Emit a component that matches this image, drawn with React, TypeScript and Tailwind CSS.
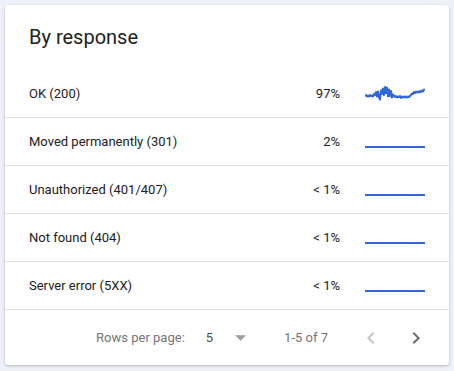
import React from 'react';

interface RowData {
  label: string;
  pct: string;
  points: string;
}

const FLAT = '0,15 60,15';

// first row sparkline, traced by eye
const OK_POINTS = [
  [0, 12], [1, 11], [2, 12.5], [3, 11.5], [4, 12.5], [5, 11], [6, 12], [7, 11.5], [8, 12.5], [9, 10],
  [10, 11], [11, 8], [12, 12.5], [13, 7.5], [14, 13.5], [15, 15.5], [16, 6.5], [17, 10], [18, 4.5],
  [19, 11], [20, 3], [21, 9], [22, 3.5], [23, 12.5], [24, 5.5], [25, 12], [26, 7], [27, 13.5],
  [28, 10.5], [29, 12], [30, 13], [31, 12], [32, 13.5], [33, 12.5], [34, 13], [35, 12], [36, 14],
  [37, 12.5], [38, 13.5], [39, 12.5], [40, 13.5], [41, 12.5], [42, 13.5], [43, 12.5], [44, 13],
  [45, 12], [46, 11], [47, 9.5], [48, 10], [49, 8], [50, 9], [51, 7.5], [52, 8.5], [53, 7.5],
  [54, 8.5], [55, 7], [56, 8], [57, 6.5], [58, 7.5], [59, 5.5], [60, 6],
]
  .map(([x, y]) => `${x},${y}`)
  .join(' ');

const rows: RowData[] = [
  { label: 'OK (200)', pct: '97%', points: OK_POINTS },
  { label: 'Moved permanently (301)', pct: '2%', points: FLAT },
  { label: 'Unauthorized (401/407)', pct: '< 1%', points: FLAT },
  { label: 'Not found (404)', pct: '< 1%', points: FLAT },
  { label: 'Server error (5XX)', pct: '< 1%', points: FLAT },
];

function Sparkline({ points }: { points: string }) {
  return (
    <svg width="60" height="20" viewBox="0 0 60 20" className="ml-[25px] shrink-0">
      <polyline points={points} fill="none" stroke="#3367d6" strokeWidth="2" strokeLinejoin="round" />
    </svg>
  );
}

export default function App() {
  return (
    <div className="min-h-screen bg-[#eef1f7] p-[5px]" style={{ fontFamily: 'Roboto, "Liberation Sans", sans-serif' }}>
      <div className="flex h-[360px] w-[444px] flex-col rounded-[3px] bg-white shadow-[0_1px_3px_rgba(0,0,0,0.25)]">
        <div className="h-[65px] px-6 pt-[18px]">
          <h2 className="text-[20px] leading-[28px] text-[#212121]">By response</h2>
        </div>

        {rows.map(r => (
          <div key={r.label} className="flex h-[48px] items-center border-b border-[#e0e0e0] pl-6 pr-6 text-[13px] text-[#212121]">
            <span className="flex-1">{r.label}</span>
            <span className="text-right">{r.pct}</span>
            <Sparkline points={r.points} />
          </div>
        ))}

        <div className="flex flex-1 items-center justify-end pr-[21px] text-[13px] text-[#757575]">
          <span>Rows per page:</span>
          <span className="ml-[21px] text-[#505050]">5</span>
          <svg width="11" height="6" viewBox="0 0 10 5" className="ml-[22px]">
            <path d="M0 0l5 5 5-5z" fill="#9e9e9e" />
          </svg>
          <span className="ml-[38px]">1-5 of 7</span>
          <button className="ml-[31px] grid h-6 w-6 place-items-center" disabled>
            <svg width="24" height="24" viewBox="0 0 24 24">
              <path d="M15.41 7.41L14 6l-6 6 6 6 1.41-1.41L10.83 12z" fill="#c4c4c4" />
            </svg>
          </button>
          <button className="ml-[21px] grid h-6 w-6 place-items-center">
            <svg width="24" height="24" viewBox="0 0 24 24">
              <path d="M10 6L8.59 7.41 13.17 12l-4.58 4.59L10 18l6-6z" fill="#6b6b6b" />
            </svg>
          </button>
        </div>
      </div>
    </div>
  );
}
